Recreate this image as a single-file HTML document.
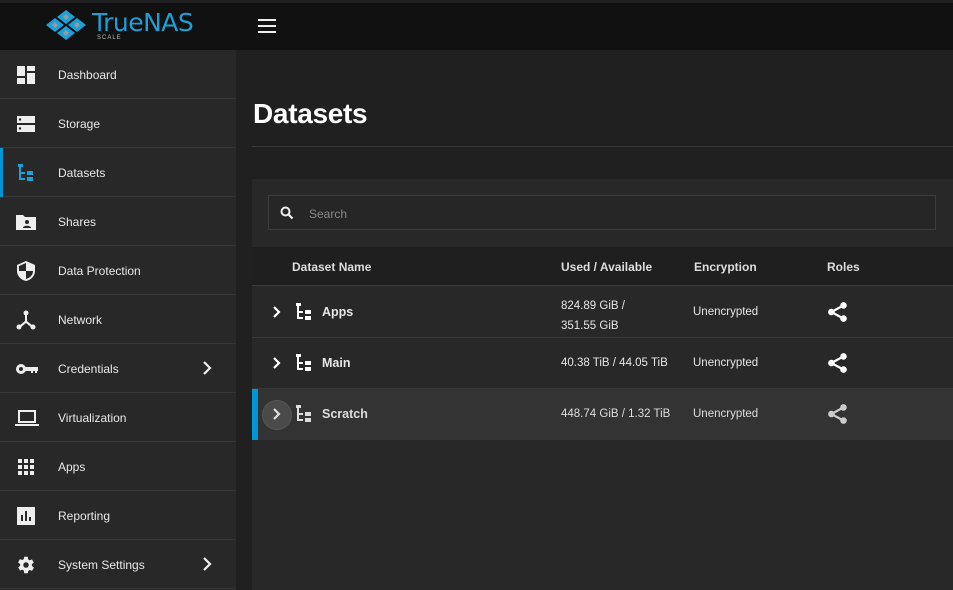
<!DOCTYPE html>
<html><head><style>
*{margin:0;padding:0;box-sizing:border-box}
body{width:953px;height:590px;overflow:hidden;background:#202020;font-family:"Liberation Sans",sans-serif;color:#e6e6e6;position:relative}
.hdr{position:absolute;left:0;top:0;width:953px;height:50px;background:#111;border-top:3px solid #1f1f1f}
.side{position:absolute;left:0;top:50px;width:236px;height:540px;background:#282828}
.item{height:49px;border-bottom:1px solid #363636;position:relative;font-size:12px;color:#e8e8e8}
.item span{position:absolute;left:58px;top:18px}
.item svg{position:absolute;left:15px;top:14px}
.act:before{content:"";position:absolute;left:0;top:0;width:3px;height:49px;background:#0095d5}
.title{position:absolute;left:253px;top:98px;font-size:28px;font-weight:bold;color:#fff;font-family:"Liberation Sans",sans-serif;letter-spacing:-0.3px}
.line{position:absolute;left:252px;top:146px;width:701px;height:1px;background:#3a3a3a}
.card{position:absolute;left:252px;top:179px;width:701px;height:411px;background:#282828}
.search{position:absolute;left:16px;top:16px;width:668px;height:35px;border:1px solid #3c3c3c;background:#262626}
.search span{position:absolute;left:40px;top:11px;font-size:12px;color:#888}
.th{position:absolute;left:0;top:68px;width:701px;height:39px;background:#1f1f1f;border-bottom:1px solid #3a3a3a;font-size:12px;font-weight:bold;color:#ddd}
.th span,.row span{position:absolute}
.row{position:absolute;left:0;width:701px;height:51px;border-bottom:1px solid #383838;font-size:11.5px}
.nm{left:70px;font-weight:bold;font-size:12.5px;top:18px}
</style></head><body>
<div class="hdr">
<svg style="position:absolute;left:43px;top:6px" width="46" height="32" viewBox="0 0 46 32"><g fill="#1d9fd8"><polygon points="23,1 32,8 23,15 14,8"/><polygon points="12,9 21,16 12,23 3,16"/><polygon points="34,9 43,16 34,23 25,16"/><polygon points="23,17 32,24 23,31 14,24"/></g><g fill="#999"><polygon points="23,5 26,8 23,11 20,8"/><polygon points="12,13 15,16 12,19 9,16"/><polygon points="34,13 37,16 34,19 31,16"/><polygon points="23,21 26,24 23,27 20,24"/></g></svg>
<div style="position:absolute;left:92px;top:5px;font-size:25px;color:#1d9fd8;font-family:'DejaVu Sans',sans-serif;letter-spacing:-0.5px">TrueNAS</div>
<div style="position:absolute;left:97px;top:32px;font-size:6px;color:#bbb;letter-spacing:1px">SCALE</div>
<div style="position:absolute;left:258px;top:16px;width:18px">
<div style="height:2px;background:#eee;margin-bottom:4px"></div><div style="height:2px;background:#eee;margin-bottom:4px"></div><div style="height:2px;background:#eee"></div></div>
</div>
<div class="side">
<div class="item"><svg width="22" height="22" viewBox="0 0 22 22" fill="#eee"><rect x="2" y="2" width="8" height="10"/><rect x="12" y="2" width="8" height="5"/><rect x="2" y="14" width="8" height="6"/><rect x="12" y="9" width="8" height="11"/></svg><span>Dashboard</span></div>
<div class="item"><svg width="22" height="22" viewBox="0 0 22 22" fill="#eee"><rect x="2" y="3" width="18" height="7"/><rect x="2" y="12" width="18" height="7"/><circle cx="5" cy="6.5" r="1.2" fill="#282828"/><circle cx="5" cy="15.5" r="1.2" fill="#282828"/></svg><span>Storage</span></div>
<div class="item act"><svg width="22" height="22" viewBox="0 0 22 22" fill="#1d9fd8"><rect x="3" y="2" width="5" height="3"/><rect x="4" y="5" width="2" height="13"/><rect x="4" y="10" width="6" height="2"/><rect x="4" y="16" width="6" height="2"/><rect x="12" y="9" width="6" height="4"/><rect x="12" y="15" width="6" height="4"/></svg><span>Datasets</span></div>
<div class="item"><svg width="22" height="22" viewBox="0 0 22 22" fill="#eee"><path d="M1 4h7l2 2h11v13H1z"/><circle cx="12" cy="11" r="2" fill="#282828"/><path d="M8 17c0-3 8-3 8 0z" fill="#282828"/></svg><span>Shares</span></div>
<div class="item"><svg width="22" height="22" viewBox="0 0 22 22" fill="#eee"><path d="M11 1l9 4v6c0 5-4 9-9 10-5-1-9-5-9-10V5z"/><path d="M11 3v8H4V6zM11 11h7c0 4-3 7-7 8z" fill="#282828"/></svg><span>Data Protection</span></div>
<div class="item"><svg width="22" height="22" viewBox="0 0 22 22" fill="#eee"><circle cx="11" cy="4" r="2.5"/><circle cx="4" cy="18" r="2.5"/><circle cx="18" cy="18" r="2.5"/><path d="M10 4h2v8l6 5-1.5 1.5L11 14l-5.5 4.5L4 17l6-5z"/></svg><span>Network</span></div>
<div class="item"><svg width="24" height="22" viewBox="0 0 24 22" fill="#eee"><circle cx="6" cy="11" r="5"/><circle cx="6" cy="11" r="2" fill="#282828"/><rect x="10" y="9" width="13" height="4"/><rect x="16" y="12" width="2" height="3"/><rect x="20" y="12" width="2" height="3"/></svg><span>Credentials</span><svg style="left:200px;top:16px" width="14" height="16" viewBox="0 0 14 16"><path d="M4 2l6 6-6 6" stroke="#eee" stroke-width="2.2" fill="none"/></svg></div>
<div class="item"><svg width="26" height="22" viewBox="0 0 26 22" fill="#eee"><path d="M3 3h18v13H3zM5 5v9h14V5z" fill-rule="evenodd"/><rect x="0" y="17" width="24" height="2"/></svg><span>Virtualization</span></div>
<div class="item"><svg width="22" height="22" viewBox="0 0 22 22" fill="#eee"><g><rect x="3" y="3" width="4" height="4"/><rect x="9" y="3" width="4" height="4"/><rect x="15" y="3" width="4" height="4"/><rect x="3" y="9" width="4" height="4"/><rect x="9" y="9" width="4" height="4"/><rect x="15" y="9" width="4" height="4"/><rect x="3" y="15" width="4" height="4"/><rect x="9" y="15" width="4" height="4"/><rect x="15" y="15" width="4" height="4"/></g></svg><span>Apps</span></div>
<div class="item"><svg width="22" height="22" viewBox="0 0 22 22" fill="#eee"><rect x="2" y="2" width="18" height="18"/><rect x="6" y="10" width="2" height="6" fill="#282828"/><rect x="10" y="6" width="2" height="10" fill="#282828"/><rect x="14" y="12" width="2" height="4" fill="#282828"/></svg><span>Reporting</span></div>
<div class="item"><svg width="22" height="22" viewBox="0 0 24 24" fill="#eee"><path d="M19.4 13a7.5 7.5 0 000-2l2.1-1.6-2-3.5-2.5 1a7.7 7.7 0 00-1.7-1L15 3h-4l-.4 2.6a7.7 7.7 0 00-1.7 1l-2.5-1-2 3.5L6.6 11a7.5 7.5 0 000 2l-2.1 1.6 2 3.5 2.5-1a7.7 7.7 0 001.7 1L11 21h4l.4-2.6a7.7 7.7 0 001.7-1l2.5 1 2-3.5z" transform="translate(-1 0)"/><circle cx="12" cy="12" r="3" fill="#282828"/></svg><span>System Settings</span><svg style="left:200px;top:16px" width="14" height="16" viewBox="0 0 14 16"><path d="M4 2l6 6-6 6" stroke="#eee" stroke-width="2.2" fill="none"/></svg></div>
</div>
<div class="title">Datasets</div>
<div class="line"></div>
<div class="card">
<div class="search"><svg style="position:absolute;left:11px;top:10px" width="14" height="14" viewBox="0 0 14 14"><circle cx="5.5" cy="5.5" r="4" stroke="#eee" stroke-width="2" fill="none"/><path d="M8.5 8.5l4 4" stroke="#eee" stroke-width="2.2"/></svg><span>Search</span></div>
<div class="th"><span style="left:40px;top:13px">Dataset Name</span><span style="left:309px;top:13px">Used / Available</span><span style="left:442px;top:13px">Encryption</span><span style="left:575px;top:13px">Roles</span></div>
<div class="row" style="top:108px">
<svg style="position:absolute;left:20px;top:18px" width="10" height="14" viewBox="0 0 10 14"><path d="M2 2l5 5-5 5" stroke="#fff" stroke-width="2.2" fill="none"/></svg>
<svg style="position:absolute;left:42px;top:14px" width="22" height="22" viewBox="0 0 22 22" fill="#fff"><rect x="2" y="2" width="5" height="3"/><rect x="3" y="5" width="2" height="13"/><rect x="3" y="10" width="6" height="2"/><rect x="3" y="16" width="6" height="2"/><rect x="11" y="9" width="6" height="4"/><rect x="11" y="15" width="6" height="4"/></svg>
<span class="nm">Apps</span><span style="left:309px;top:9px;line-height:20px">824.89 GiB /<br>351.55 GiB</span><span style="left:441px;top:19px">Unencrypted</span>
<svg style="position:absolute;left:575px;top:14px" width="22" height="22" viewBox="0 0 20 20" fill="#fff"><circle cx="15" cy="4" r="3"/><circle cx="4" cy="10" r="3"/><circle cx="15" cy="16" r="3"/><path d="M4 10L15 4M4 10l11 6" stroke="#fff" stroke-width="2"/></svg></div>
<div class="row" style="top:159px">
<svg style="position:absolute;left:20px;top:18px" width="10" height="14" viewBox="0 0 10 14"><path d="M2 2l5 5-5 5" stroke="#fff" stroke-width="2.2" fill="none"/></svg>
<svg style="position:absolute;left:42px;top:14px" width="22" height="22" viewBox="0 0 22 22" fill="#fff"><rect x="2" y="2" width="5" height="3"/><rect x="3" y="5" width="2" height="13"/><rect x="3" y="10" width="6" height="2"/><rect x="3" y="16" width="6" height="2"/><rect x="11" y="9" width="6" height="4"/><rect x="11" y="15" width="6" height="4"/></svg>
<span class="nm">Main</span><span style="left:309px;top:19px">40.38 TiB / 44.05 TiB</span><span style="left:441px;top:19px">Unencrypted</span>
<svg style="position:absolute;left:575px;top:14px" width="22" height="22" viewBox="0 0 20 20" fill="#fff"><circle cx="15" cy="4" r="3"/><circle cx="4" cy="10" r="3"/><circle cx="15" cy="16" r="3"/><path d="M4 10L15 4M4 10l11 6" stroke="#fff" stroke-width="2"/></svg></div>
<div class="row" style="top:210px;background:#333;border-bottom:none">
<div style="position:absolute;left:0;top:0;width:6px;height:51px;background:#0095d5"></div>
<div style="position:absolute;left:10px;top:11px;width:30px;height:30px;border-radius:50%;background:#4a4a4a;border:1px solid #555"></div>
<svg style="position:absolute;left:20px;top:18px" width="10" height="14" viewBox="0 0 10 14"><path d="M2 2l5 5-5 5" stroke="#ddd" stroke-width="2.2" fill="none"/></svg>
<svg style="position:absolute;left:42px;top:14px" width="22" height="22" viewBox="0 0 22 22" fill="#ddd"><rect x="2" y="2" width="5" height="3"/><rect x="3" y="5" width="2" height="13"/><rect x="3" y="10" width="6" height="2"/><rect x="3" y="16" width="6" height="2"/><rect x="11" y="9" width="6" height="4"/><rect x="11" y="15" width="6" height="4"/></svg>
<span class="nm" style="color:#ddd">Scratch</span><span style="left:309px;top:19px;color:#ddd">448.74 GiB / 1.32 TiB</span><span style="left:441px;top:19px;color:#ddd">Unencrypted</span>
<svg style="position:absolute;left:575px;top:14px" width="22" height="22" viewBox="0 0 20 20" fill="#ccc"><circle cx="15" cy="4" r="3"/><circle cx="4" cy="10" r="3"/><circle cx="15" cy="16" r="3"/><path d="M4 10L15 4M4 10l11 6" stroke="#ccc" stroke-width="2"/></svg></div>
</div>
</body></html>
